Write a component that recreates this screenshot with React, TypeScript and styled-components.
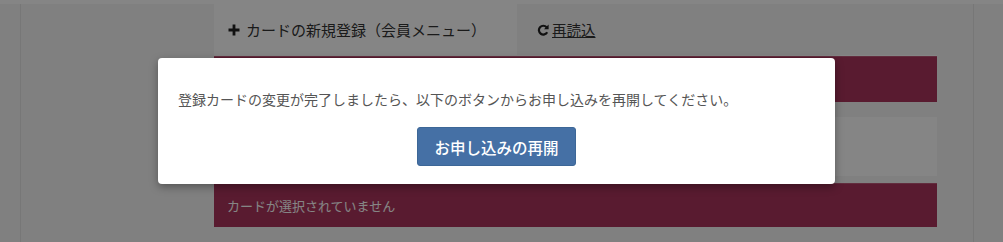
import { createGlobalStyle, styled } from 'styled-components';

const GlobalStyle = createGlobalStyle`
  html, body {
    margin: 0;
    padding: 0;
    background: #f5f5f5;
  }
  body {
    font-family: "Noto Sans CJK JP", "Noto Sans", sans-serif;
    color: #333;
  }
`;

const Page = styled.div`
  position: relative;
  width: 1003px;
  height: 242px;
  overflow: hidden;
  display: flex;
  flex-direction: column;
`;

const TopBand = styled.div`
  height: 4px;
  background: #fff;
`;

const Frame = styled.div`
  flex: 1;
  display: flex;
  margin: 0 29px 0 20px;
  border-left: 1px solid #e4e4e4;
  border-right: 1px solid #e4e4e4;
  padding-left: 193px;
`;

const Column = styled.div`
  width: 723px;
  display: flex;
  flex-direction: column;
`;

const Tabs = styled.div`
  display: flex;
  align-items: stretch;
  height: 51px;
  border-bottom: 1px solid #fff;
`;

const Tab = styled.div<{ $active?: boolean }>`
  display: flex;
  align-items: center;
  gap: 6px;
  padding: 0 20px 0 14px;
  width: ${p => (p.$active ? '303px' : 'auto')};
  box-sizing: border-box;
  background: ${p => (p.$active ? '#fff' : 'transparent')};
  font-size: 15px;
  color: #333;
`;

const ReloadLink = styled.a`
  display: flex;
  align-items: center;
  gap: 3px;
  padding-left: 20px;
  font-size: 14.5px;
  color: #333;
  span {
    text-decoration: underline;
  }
`;

const Notice = styled.div<{ $height: number }>`
  height: ${p => p.$height}px;
  box-sizing: border-box;
  display: flex;
  align-items: center;
  padding-left: 13px;
  background: #ab345c;
  border-top: 1px solid #bd5778;
  color: #fff;
  font-size: 13px;
`;

const Panel = styled.div`
  height: 59px;
  margin: 15px 0 7px;
  background: #fff;
`;

const Backdrop = styled.div`
  position: absolute;
  inset: 0;
  background: rgba(0, 0, 0, 0.48);
  display: flex;
  align-items: flex-start;
`;

const Modal = styled.div`
  margin: 58px 0 0 158px;
  width: 677px;
  height: 126px;
  box-sizing: border-box;
  padding: 30px 20px 18px;
  background: #fff;
  border-radius: 4px;
  box-shadow: 0 3px 9px rgba(0, 0, 0, 0.35);
  display: flex;
  flex-direction: column;
  align-items: center;
`;

const Message = styled.p`
  align-self: stretch;
  margin: 0 0 17px;
  font-size: 14px;
  line-height: 22px;
  color: #555;
`;

const PrimaryButton = styled.button`
  width: 159px;
  height: 39px;
  border: 1px solid #3d6797;
  border-radius: 3px;
  background: #4570a5;
  color: #fff;
  font-family: inherit;
  font-size: 15.5px;
  font-weight: 500;
  padding: 0;
`;

const PlusIcon = () => (
  <svg width="12" height="12" viewBox="0 0 12 12">
    <path d="M6 0.5v11M0.5 6h11" stroke="#222" strokeWidth="2.8" />
  </svg>
);

const RefreshIcon = () => (
  <svg width="12" height="12" viewBox="0 0 12 12">
    <path
      d="M9.6 3.2A4.4 4.4 0 1 0 10.2 8.2"
      fill="none"
      stroke="#222"
      strokeWidth="2.2"
    />
    <path d="M11.6 0.6v4.6H7z" fill="#222" />
  </svg>
);

export default function App() {
  return (
    <>
      <GlobalStyle />
      <Page>
        <TopBand />
        <Frame>
          <Column>
            <Tabs>
              <Tab $active>
                <PlusIcon />
                カードの新規登録（会員メニュー）
              </Tab>
              <ReloadLink>
                <RefreshIcon />
                <span>再読込</span>
              </ReloadLink>
            </Tabs>
            <Notice $height={46} />
            <Panel />
            <Notice $height={44}>カードが選択されていません</Notice>
          </Column>
        </Frame>
        <Backdrop>
          <Modal>
            <Message>
              登録カードの変更が完了しましたら、以下のボタンからお申し込みを再開してください。
            </Message>
            <PrimaryButton>お申し込みの再開</PrimaryButton>
          </Modal>
        </Backdrop>
      </Page>
    </>
  );
}
